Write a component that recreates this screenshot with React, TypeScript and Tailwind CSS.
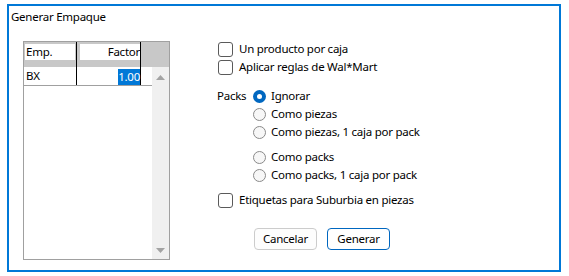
import React from "react";

const font = { fontFamily: '"Noto Sans", "Open Sans", sans-serif' };

function Checkbox({ label }: { label: string }) {
  return (
    <div className="flex h-[18px] items-center">
      <div className="ml-[1px] h-[15px] w-[15px] shrink-0 rounded-[3px] border-[1.5px] border-[#5a5a5a] bg-white" />
      <span className="ml-[6px] whitespace-nowrap">{label}</span>
    </div>
  );
}

function Radio({ label, checked }: { label: string; checked?: boolean }) {
  return (
    <div className="flex h-[18px] items-center">
      {checked ? (
        <div className="flex h-[13px] w-[13px] shrink-0 items-center justify-center rounded-full bg-[#0067c0]">
          <div className="h-[5px] w-[5px] rounded-full bg-white" />
        </div>
      ) : (
        <div className="h-[13px] w-[13px] shrink-0 rounded-full border border-[#8a8a8a] bg-[#f7f7f7]" />
      )}
      <span className="ml-[5px] whitespace-nowrap">{label}</span>
    </div>
  );
}

function Grid() {
  return (
    <div className="flex h-[219px] w-[147px] flex-col border border-[#a0a0a0] bg-white">
      <div className="flex h-[25px] shrink-0 bg-[#c8c8c8]">
        <div className="flex w-[53px] border-r border-black pl-[1px] pr-[1px] pt-[2px]">
          <div className="flex h-[16px] w-[50px] items-center bg-white pl-[1px]">Emp.</div>
        </div>
        <div className="flex w-[64px] border-r border-black pl-[3px] pt-[2px]">
          <div className="flex h-[16px] w-[60px] items-center justify-end bg-white">Factor</div>
        </div>
      </div>
      <div className="flex flex-1">
        <div className="flex w-[128px] flex-col">
          <div className="flex h-[19px] border-b border-[#a0a0a0]">
            <div className="flex w-[53px] items-center border-r border-black pl-[2px]">BX</div>
            <div className="flex w-[64px] items-center justify-end border-r border-black pt-[1px]">
              <span className="flex h-[16px] items-center bg-[#0078d7] text-white">1.00</span>
            </div>
          </div>
        </div>
        <div className="flex w-[17px] flex-col items-center justify-between bg-[#f0f0f0] pb-[6px] pt-[8px]">
          <svg width="9" height="5" viewBox="0 0 9 5">
            <polygon points="0,5 9,5 4.5,0" fill="#a3a3a3" />
          </svg>
          <svg width="9" height="5" viewBox="0 0 9 5">
            <polygon points="0,0 9,0 4.5,5" fill="#a3a3a3" />
          </svg>
        </div>
      </div>
    </div>
  );
}

export default function App() {
  return (
    <div
      className="h-[276px] w-[569px] bg-white text-[11.5px] leading-[16px] tracking-[-0.25px] text-black"
      style={font}
    >
      <div className="pl-[7px] pt-[4px]">
        <div className="flex h-[268px] w-[554px] flex-col border-2 border-[#0078d7]">
          <div className="pl-[2px] pt-[3px]">Generar Empaque</div>
          <div className="mt-[13px] flex items-start">
            <div className="ml-[14px] mt-[3px]">
              <Grid />
            </div>
            <div className="ml-[47px] mt-[2px] flex flex-col">
              <Checkbox label="Un producto por caja" />
              <Checkbox label="Aplicar reglas de Wal*Mart" />
              <div className="mt-[11px] flex">
                <div className="flex h-[18px] w-[36px] items-center">Packs</div>
                <div className="flex flex-col">
                  <Radio label="Ignorar" checked />
                  <Radio label="Como piezas" />
                  <Radio label="Como piezas, 1 caja por pack" />
                  <div className="h-[7px]" />
                  <Radio label="Como packs" />
                  <Radio label="Como packs, 1 caja por pack" />
                </div>
              </div>
              <div className="mt-[7px]">
                <Checkbox label="Etiquetas para Suburbia en piezas" />
              </div>
              <div className="ml-[37px] mt-[19px] flex gap-[10px]">
                <button className="h-[22px] w-[63px] rounded-[4px] border border-[#cccccc] bg-[#fdfdfd]">Cancelar</button>
                <button className="h-[22px] w-[63px] rounded-[4px] border-[1.5px] border-[#0067c0] bg-white">Generar</button>
              </div>
            </div>
          </div>
        </div>
      </div>
    </div>
  );
}
